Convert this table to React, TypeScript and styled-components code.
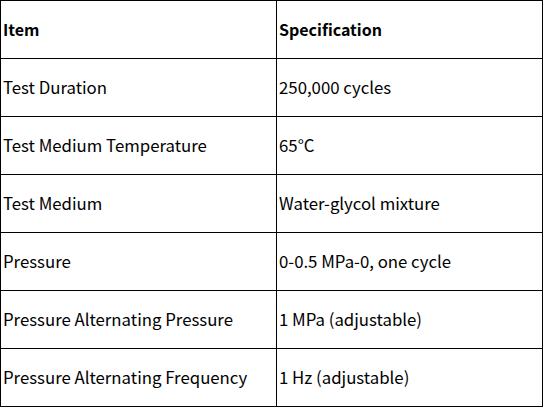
import styled, { createGlobalStyle } from 'styled-components';

const GlobalStyle = createGlobalStyle`
  html, body {
    margin: 0;
    padding: 0;
    background: #fff;
  }
  body {
    font-family: "Noto Sans CJK SC", "Noto Sans", sans-serif;
    color: #000;
  }
`;

const SpecTable = styled.table`
  width: 543px;
  border-collapse: collapse;
  table-layout: fixed;
`;

const HeadCell = styled.th`
  height: 55px;
  padding: 0 2px 2px;
  border: 1px solid #000;
  text-align: left;
  vertical-align: middle;
  font-size: 16px;
  font-weight: 700;

  &:first-child {
    width: 271px;
  }
`;

const Cell = styled.td`
  height: 55px;
  padding: 0 2px 2px;
  border: 1px solid #000;
  text-align: left;
  vertical-align: middle;
  font-size: 16.8px;
  font-weight: 400;
  white-space: nowrap;
`;

const rows: [string, string][] = [
  ['Test Duration', '250,000 cycles'],
  ['Test Medium Temperature', '65°C'],
  ['Test Medium', 'Water-glycol mixture'],
  ['Pressure', '0-0.5 MPa-0, one cycle'],
  ['Pressure Alternating Pressure', '1 MPa (adjustable)'],
  ['Pressure Alternating Frequency', '1 Hz (adjustable)'],
];

const App = () => {
  return (
    <>
      <GlobalStyle />
      <SpecTable>
        <thead>
          <tr>
            <HeadCell>Item</HeadCell>
            <HeadCell>Specification</HeadCell>
          </tr>
        </thead>
        <tbody>
          {rows.map(([item, spec]) => (
            <tr key={item}>
              <Cell>{item}</Cell>
              <Cell>{spec}</Cell>
            </tr>
          ))}
        </tbody>
      </SpecTable>
    </>
  );
};

export default App;
